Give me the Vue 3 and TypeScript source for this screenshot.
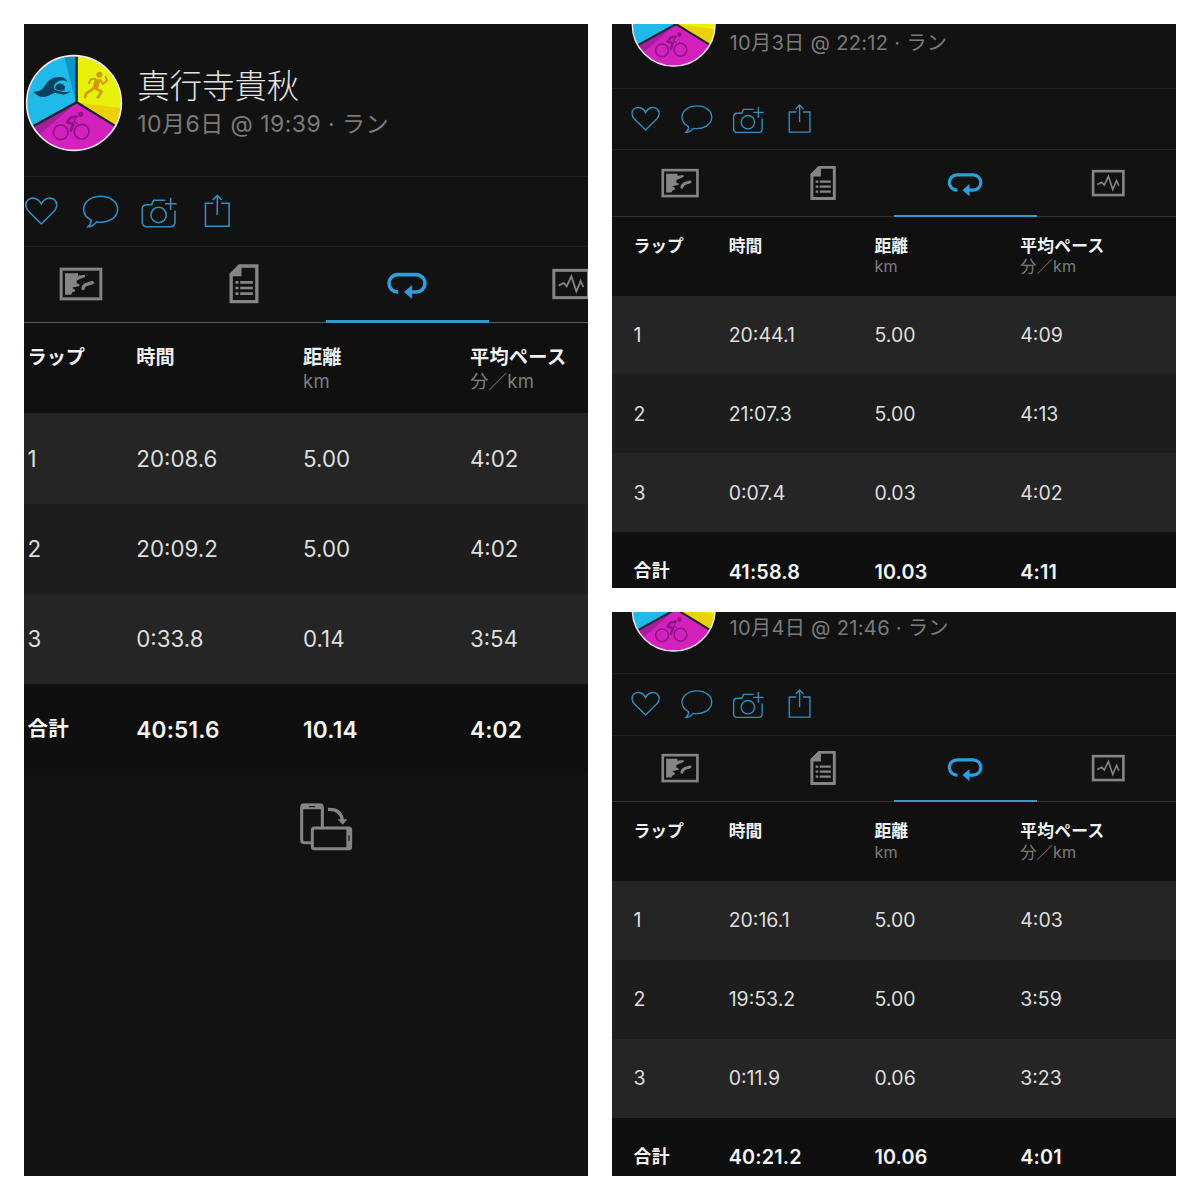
<script setup lang="ts">
interface Lap {
  lap: string
  time: string
  distance: string
  pace: string
}

interface Activity {
  id: string
  date: string
  laps: Lap[]
  total: Lap
  rotateHint: boolean
}

const athlete = '真行寺貴秋'

const activities: Activity[] = [
  {
    id: 'main',
    date: '10月6日 @ 19:39 · ラン',
    laps: [
      { lap: '1', time: '20:08.6', distance: '5.00', pace: '4:02' },
      { lap: '2', time: '20:09.2', distance: '5.00', pace: '4:02' },
      { lap: '3', time: '0:33.8', distance: '0.14', pace: '3:54' },
    ],
    total: { lap: '合計', time: '40:51.6', distance: '10.14', pace: '4:02' },
    rotateHint: true,
  },
  {
    id: 'upper',
    date: '10月3日 @ 22:12 · ラン',
    laps: [
      { lap: '1', time: '20:44.1', distance: '5.00', pace: '4:09' },
      { lap: '2', time: '21:07.3', distance: '5.00', pace: '4:13' },
      { lap: '3', time: '0:07.4', distance: '0.03', pace: '4:02' },
    ],
    total: { lap: '合計', time: '41:58.8', distance: '10.03', pace: '4:11' },
    rotateHint: false,
  },
  {
    id: 'lower',
    date: '10月4日 @ 21:46 · ラン',
    laps: [
      { lap: '1', time: '20:16.1', distance: '5.00', pace: '4:03' },
      { lap: '2', time: '19:53.2', distance: '5.00', pace: '3:59' },
      { lap: '3', time: '0:11.9', distance: '0.06', pace: '3:23' },
    ],
    total: { lap: '合計', time: '40:21.2', distance: '10.06', pace: '4:01' },
    rotateHint: false,
  },
]
</script>

<template>
  <main class="collage">
    <section v-for="a in activities" :key="a.id" class="panel" :class="a.id">
      <div class="screen">
        <header class="head">
          <svg class="avatar" viewBox="10 39 300 300">
            <defs>
              <clipPath :id="'disc-' + a.id"><circle cx="160" cy="189" r="141" /></clipPath>
            </defs>
            <g :clip-path="`url(#disc-${a.id})`">
              <rect x="10" y="39" width="300" height="300" fill="#1fb9ea" />
              <path d="M166 187 L128 39 H168 Z" fill="#0f93c6" />
              <path d="M168 187 V39 H310 V274 Z" fill="#e6f20c" />
              <path d="M168 187 L310 206 V274 Z" fill="#ecd00c" />
              <path d="M168 187 L310 274 V339 H10 V274 Z" fill="#d321bd" />
              <path d="M168 187 L10 274 V320 L50 290 Z" fill="#a81d9b" />
              <path d="M168 39 V187 L10 274 M168 187 L310 274" fill="none" stroke="#1b2433" stroke-width="7" />
              <path d="M38 155 C56 156 66 148 74 135 C84 118 99 110 119 111 C131 112 137 117 141 126 C128 118 117 120 108 127 C99 134 98 143 102 149 C122 156 137 158 150 154 C137 166 124 165 109 160 C94 156 88 169 72 171 C57 172 47 165 38 155 Z" fill="#0d405e" />
              <path d="M104 147 A15 13 0 1 1 131 151 Q117 155 104 147 Z" fill="#0d405e" />
              <g fill="none" stroke="#d09a0b" stroke-linejoin="round">
                <path d="M231 118 L223 148" stroke-width="17" />
                <path d="M225 116 L210 118 L204 132" stroke-width="6" />
                <path d="M237 117 L247 132 L259 122 L254 108" stroke-width="6" />
                <path d="M221 144 L197 160 L192 175" stroke-width="8" />
                <path d="M225 146 L243 155 L230 175" stroke-width="8" />
              </g>
              <circle cx="236" cy="104" r="9" fill="#d09a0b" />
              <g fill="none" stroke="#8c1286" stroke-width="5">
                <circle cx="120" cy="277" r="22" />
                <circle cx="183" cy="275" r="22" />
                <path d="M168 237 L140 220 L132 233 L158 247 L151 271" stroke-width="0" />
                <path d="M170 229 L149 233 L139 247 L158 252 L149 275" stroke-width="8" stroke-linejoin="round" />
                <path d="M167 231 L160 245 L170 251" stroke-width="4" />
              </g>
              <circle cx="180" cy="223" r="8" fill="#8c1286" />
            </g>
            <circle cx="160" cy="189" r="142" fill="none" stroke="#f6e9f5" stroke-width="5" />
          </svg>
          <div class="who">
            <div class="name">{{ athlete }}</div>
            <div class="date">{{ a.date }}</div>
          </div>
        </header>

        <nav class="actions">
          <svg viewBox="7 68 114 108">
            <path d="M64 161 L25 122 C15 111 15 96 25 88 C37 79 55 83 64 101 C73 83 91 79 103 88 C113 96 113 111 103 122 Z" />
          </svg>
          <svg viewBox="184 68 114 108">
            <path d="M242 78 C213 78 191 95 191 117 C191 132 199 142 213 149 C215 157 210 164 204 169 C215 169 223 163 229 155 C265 160 293 142 293 116 C293 95 271 78 242 78 Z" />
          </svg>
          <svg viewBox="359 68 114 108">
            <path d="M437 90 H402 L396 103 H381 Q368 103 368 116 V156 Q368 169 381 169 H453 Q466 169 466 156 V121 M453 82 V119 M436 100 H471" />
            <circle cx="417" cy="134" r="23" />
          </svg>
          <svg viewBox="534.5 68 114 108">
            <path d="M580 99 H556 V168 H627 V99 H603 M591.5 134 V75 M578 89 L591.5 75 L605 89" />
          </svg>
        </nav>

        <nav class="tabs">
          <div class="tab">
            <svg viewBox="55 32 138 138">
              <rect x="64.5" y="56.5" width="119" height="89" fill="none" stroke="#858585" stroke-width="9" />
              <path d="M76 69 H115 V76 L136 73 V80 L119 87 L111 91 V99 L119 102 V107 L97 112 L106 118 V123 L98 126 L94 133 H76 Z" fill="#858585" />
              <path d="M130 115 C133 100 143 103 158 97" fill="none" stroke="#858585" stroke-width="10" stroke-linecap="round" />
            </svg>
          </div>
          <div class="tab">
            <svg viewBox="544.5 32 138 138">
              <path d="M600 47 H652 V154 H575 V72 Z" fill="none" stroke="#858585" stroke-width="10" />
              <path d="M571 70 L598 43 H606 V78 H571 Z" fill="#858585" />
              <path d="M588 96 H597 M588 113 H597 M588 130 H597 M602 96 H640 M602 113 H640 M602 130 H640" stroke="#858585" stroke-width="8" />
            </svg>
          </div>
          <div class="tab active">
            <svg viewBox="194 33 138 138">
              <path d="M237 126 H235 A26 26 0 0 1 235 74 H291 A26 26 0 0 1 291 126 H270" fill="none" stroke="#2ba0dc" stroke-width="11" />
              <path d="M254 126 L278 105 V147 Z" fill="#2ba0dc" />
            </svg>
          </div>
          <div class="tab">
            <svg viewBox="683 33 138 138">
              <rect x="700.5" y="61" width="104" height="82" fill="none" stroke="#858585" stroke-width="9" />
              <path d="M715 107 L730 99 L739 109 L753 79 L768 124 L781 93 L789 111" fill="none" stroke="#858585" stroke-width="5.5" />
            </svg>
          </div>
        </nav>

        <div class="row labels">
          <span>ラップ</span>
          <span>時間</span>
          <span>距離<small>km</small></span>
          <span>平均ペース<small>分／km</small></span>
        </div>
        <div v-for="l in a.laps" :key="l.lap" class="row lap">
          <span>{{ l.lap }}</span>
          <span>{{ l.time }}</span>
          <span>{{ l.distance }}</span>
          <span>{{ l.pace }}</span>
        </div>
        <div class="row total">
          <span>{{ a.total.lap }}</span>
          <span>{{ a.total.time }}</span>
          <span>{{ a.total.distance }}</span>
          <span>{{ a.total.pace }}</span>
        </div>

        <div v-if="a.rotateHint" class="rotate">
          <svg viewBox="54 62 168 156">
            <g fill="none" stroke="#858585" stroke-width="9">
              <path d="M96 187 H72 Q65 187 65 180 V81 Q65 74 72 74 H120 Q127 74 127 81 V141" />
              <rect x="97" y="143" width="115" height="62" rx="6" />
              <path d="M144 87 Q184 85 187 121" stroke-width="10" />
            </g>
            <path d="M65 70 H127 V87 H65 Z M199 143 H214 V205 H199 Z M173 117 H202 L188 133 Z" fill="#858585" />
            <path d="M87 79 H105 M207 165 V182" stroke="#222" stroke-width="4" />
          </svg>
        </div>
      </div>
    </section>
  </main>
</template>

<style>
body {
  margin: 0;
  background: #fff;
}
</style>

<style scoped>
.collage {
  box-sizing: border-box;
  width: 1200px;
  height: 1200px;
  padding: 24px;
  display: grid;
  grid-template-columns: 564px 564px;
  grid-template-rows: 564px 564px;
  gap: 24px;
  background: #fff;
  font-family: Inter, "Noto Sans CJK JP", sans-serif;
}
.panel {
  overflow: hidden;
  background: #121212;
  display: flow-root;
}
.panel.main {
  grid-row: span 2;
}
.screen {
  width: 645.5px;
  zoom: 0.874;
}
.main .screen {
  zoom: 1;
  margin-left: -21.2px;
}
.upper .screen {
  margin-top: -78.5px;
}
.lower .screen {
  margin-top: -81.6px;
}
.head {
  box-sizing: border-box;
  height: 153px;
  padding: 29px 0 0 21px;
  display: flex;
  align-items: flex-start;
  border-bottom: 1px solid #232323;
}
.avatar {
  width: 100px;
  height: 100px;
  flex: none;
}
.who {
  padding: 11px 0 0 13.5px;
  white-space: nowrap;
}
.name {
  font-size: 32.4px;
  line-height: 45px;
  font-weight: 300;
  color: #e4e4e4;
}
.date {
  font-size: 23px;
  line-height: 31.4px;
  letter-spacing: 0.45px;
  color: #7b7b7b;
}
.upper .date,
.lower .date {
  letter-spacing: 0.35px;
}
.actions {
  box-sizing: border-box;
  height: 70px;
  padding: 0 0 2px 9.2px;
  display: flex;
  align-items: center;
  border-bottom: 1px solid #232323;
}
.actions svg {
  width: 38px;
  height: 36px;
  padding: 0 10.3px;
  fill: none;
  stroke: #358dc0;
  stroke-width: 4.7;
}
.tabs {
  box-sizing: border-box;
  height: 76px;
  margin-left: -3.4px;
  display: flex;
  border-bottom: 1px solid #5c5c5c;
}
.upper .tabs,
.lower .tabs {
  border-bottom: 2px solid #343434;
}
.tab {
  box-sizing: border-box;
  width: 163.2px;
  flex: none;
  display: flex;
  justify-content: center;
  padding-top: 14px;
}
.tab svg {
  width: 46px;
  height: 46px;
}
.tab.active {
  border-bottom: 3px solid #3a97cd;
  margin-bottom: -1px;
}
.row {
  box-sizing: border-box;
  height: 90.25px;
  padding-left: 24.7px;
  display: grid;
  grid-template-columns: 108.8px 166.8px 166.8px 1fr;
  align-items: center;
  font-size: 22.3px;
  color: #dedede;
  white-space: nowrap;
}
.labels {
  align-items: start;
  padding-top: 19.6px;
  background: #101010;
  font-size: 19.2px;
  line-height: 28px;
  font-weight: 700;
  color: #f0f0f0;
}
.labels small {
  display: block;
  font-size: 18.5px;
  line-height: 20px;
  font-weight: 400;
  letter-spacing: 0.2px;
  color: #7d7d7d;
}
.labels span:last-child {
  letter-spacing: 0.3px;
}
.lap {
  background: #252525;
}
.lap:nth-child(6) {
  background: #1d1d1d;
}
.total {
  background: #0f0f0f;
  font-size: 22.6px;
  font-weight: 600;
  letter-spacing: 0.2px;
  color: #f4f4f4;
}
.total span:first-child {
  font-size: 20.5px;
  line-height: 28px;
  font-weight: 700;
}
.rotate {
  padding-top: 26.5px;
  display: flex;
  justify-content: center;
}
.rotate svg {
  width: 56px;
  height: 52px;
}
</style>
